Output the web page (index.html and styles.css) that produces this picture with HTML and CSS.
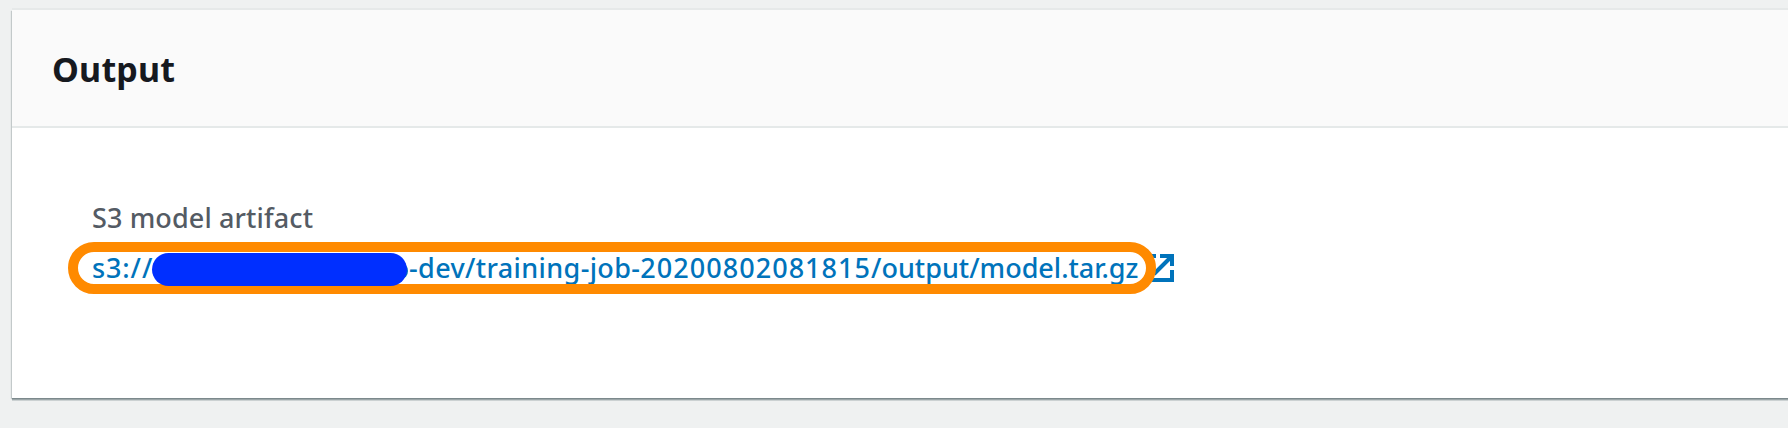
FILE: index.html
```html
<!DOCTYPE html>
<html lang="en">
<head>
<meta charset="utf-8">
<title>Output</title>
<link rel="stylesheet" href="styles.css">
</head>
<body>
<section class="card">
  <header class="card-header"><h2 class="title">Output</h2></header>
  <div class="card-body">
    <div class="label">S3 model artifact</div>
    <div class="value">
      <a class="link"><span class="scheme">s3://</span><span class="bucket"><span class="redaction"></span></span><span class="path">-dev/training-job-<span class="stamp">20200802081815</span><span class="file">/output/model.tar.gz</span></span></a>
      <svg class="external" viewBox="0 0 28 28" fill="none" stroke="currentColor" stroke-width="4">
        <path d="M10 2H2V26H26V16"/><path d="M14 2H26V12M25 3L8 20"/>
      </svg>
      <span class="highlight"></span>
    </div>
  </div>
</section>
</body>
</html>
```
FILE: styles.css
```css
*, *::after { box-sizing: border-box; }
body {
  margin: 0;
  height: 428px;
  overflow: hidden;
  padding: 10px 0 0 12px;
  background: #eff1f1;
  font-family: "Noto Sans", "Open Sans", sans-serif;
}
.card {
  width: 1800px;
  height: 388px;
  background: #fff;
  box-shadow: 0 -2px 0 #e6e9e9, 0 1px 0 #7c898c, 0 2px 0 #9ba6a8, 0 3px 0 #cbd1d2, -1px 1px 1px #c3c9ca;
}
.card-header {
  height: 118px;
  padding: 36px 0 0 40px;
  background: #fafafa;
  border-bottom: 2px solid #e5e9e9;
}
.title {
  margin: 0;
  font-size: 34px;
  line-height: 46px;
  font-weight: 700;
  letter-spacing: .2px;
  color: #16191f;
}
.card-body { padding: 70px 0 0 80px; }
.label {
  height: 50px;
  font-size: 27px;
  font-weight: 500;
  line-height: 40px;
  letter-spacing: .12px;
  color: #545b64;
}
.value {
  position: relative;
  display: flex;
  width: 1082px;
  height: 40px;
  font-size: 27px;
  font-weight: 500;
  line-height: 40px;
  color: #0073bb;
}
.link { display: flex; flex: none; width: 1054px; white-space: nowrap; }
.scheme { flex: none; width: 60px; letter-spacing: .9px; }
.bucket { flex: none; position: relative; width: 257px; }
.bucket::after {
  content: "";
  position: absolute;
  left: 242px;
  top: 15px;
  width: 14px;
  height: 16px;
  border: 3px solid #0073bb;
  border-radius: 50%;
}
.path { letter-spacing: .37px; }
.stamp { letter-spacing: 1.03px; }
.file { letter-spacing: 0; }
.redaction {
  position: absolute;
  z-index: 2;
  left: 0;
  top: 5px;
  width: 255px;
  height: 33px;
  border-radius: 17px;
  background: #002fff;
}
.external { flex: none; width: 28px; height: 28px; margin-top: 6px; }
.highlight {
  position: absolute;
  z-index: 1;
  left: -24px;
  top: -6px;
  width: 1088px;
  height: 52px;
  border: 10px solid #ff8a00;
  border-radius: 26px;
}
```
